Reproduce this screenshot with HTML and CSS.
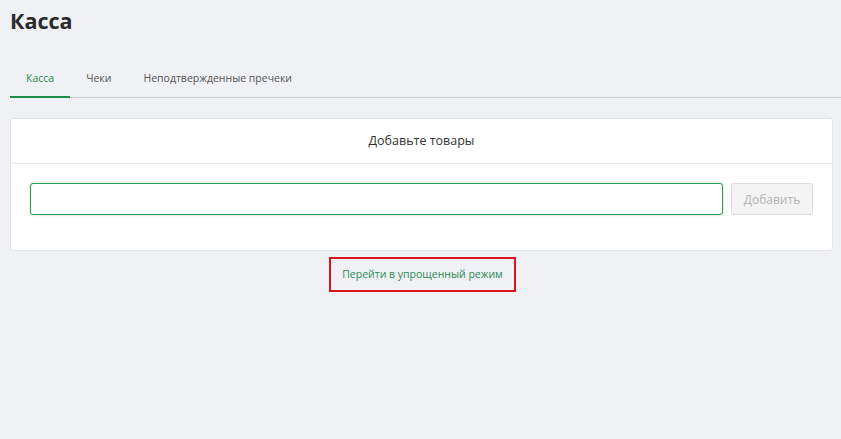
FILE: index.html
```html
<!DOCTYPE html>
<html lang="ru">
<head>
    <meta charset="UTF-8">
    <meta name="viewport" content="width=device-width, initial-scale=1.0">
    <title>Касса</title>
    <link rel="stylesheet" href="styles.css">
</head>
<body>
    <h1 class="page-title">Касса</h1>

    <!-- Tabs -->
    <nav class="tabs">
        <a class="tab active" href="#">Касса</a>
        <a class="tab" href="#">Чеки</a>
        <a class="tab" href="#">Неподтвержденные пречеки</a>
    </nav>

    <!-- Add goods card -->
    <div class="card">
        <div class="card-header">Добавьте товары</div>
        <div class="card-body">
            <input class="goods-input" type="text">
            <button class="add-btn" disabled>Добавить</button>
        </div>
    </div>

    <div class="simple-mode">
        <a class="simple-link" href="#">Перейти в упрощенный режим</a>
    </div>
</body>
</html>
```

FILE: styles.css
```css
body {
    margin: 0;
    padding: 0 0 0 10px;
    background-color: #f0f1f5;
    color: #333;
    font-family: "Open Sans", Arial, sans-serif;
}

.page-title {
    margin: 0;
    padding-top: 6px;
    font-size: 21.5px;
    font-weight: 700;
    line-height: 30px;
    color: #2b2b2b;
}

.tabs {
    display: flex;
    margin-top: 24px;
    border-bottom: 1px solid #c9cacd;
}

.tab {
    padding: 10px 16px 9px;
    font-size: 10.5px;
    line-height: 17px;
    color: #555;
    text-decoration: none;
    border-bottom: 2px solid transparent;
    margin-bottom: -1px;
}

.tab.active {
    color: #1e8c4e;
    border-bottom-color: #1e8c4e;
}

.card {
    margin: 20px 8px 0 0;
    background: #fff;
    border: 1px solid #e3e4e8;
    border-radius: 3px;
}

.card-header {
    height: 44px;
    line-height: 44px;
    text-align: center;
    font-size: 12.5px;
    color: #333;
    border-bottom: 1px solid #e6e7ea;
}

.card-body {
    display: flex;
    gap: 8px;
    padding: 19px 19px 35px 19px;
}

.goods-input {
    flex: 1;
    height: 32px;
    box-sizing: border-box;
    border: 1px solid #2e9a5c;
    border-radius: 3px;
    box-shadow: 0 0 2px rgba(46, 154, 92, 0.45);
    outline: none;
    font-family: inherit;
}

.add-btn {
    width: 82px;
    height: 32px;
    background: #f4f4f4;
    border: 1px solid #dcdcdc;
    border-radius: 3px;
    color: #b3b3b3;
    font-family: inherit;
    font-size: 12px;
}

.simple-mode {
    display: flex;
    justify-content: center;
    margin-top: 6px;
    padding-right: 6px;
}

.simple-link {
    display: block;
    width: 183px;
    height: 31px;
    line-height: 31px;
    text-align: center;
    border: 2px solid #d9141c;
    font-size: 10.5px;
    color: #2a8a56;
    text-decoration: none;
}
```
